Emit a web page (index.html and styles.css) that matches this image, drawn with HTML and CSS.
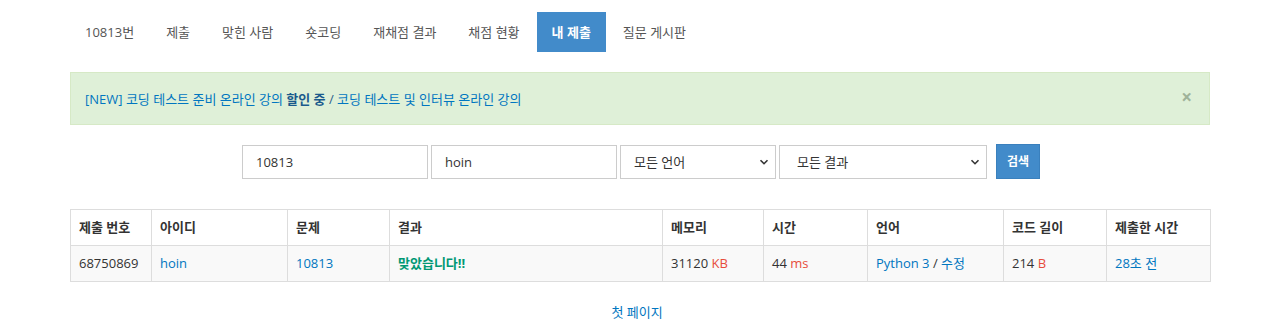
FILE: index.html
```html
<!DOCTYPE html>
<html lang="ko">
<head>
<meta charset="utf-8">
<link rel="stylesheet" href="styles.css">
</head>
<body>
<div class="container">
  <ul class="nav">
    <li><a href="#">10813번</a></li>
    <li><a href="#">제출</a></li>
    <li><a href="#">맞힌 사람</a></li>
    <li><a href="#">숏코딩</a></li>
    <li><a href="#">재채점 결과</a></li>
    <li><a href="#">채점 현황</a></li>
    <li class="active"><a href="#">내 제출</a></li>
    <li><a href="#">질문 게시판</a></li>
  </ul>

  <div class="alert">
    <span class="alert-text"><a href="#">[NEW] 코딩 테스트 준비 온라인 강의 <b>할인 중</b></a> / <a href="#">코딩 테스트 및 인터뷰 온라인 강의</a></span>
    <span class="close">×</span>
  </div>

  <form class="search">
    <input class="field f1" type="text" value="10813">
    <input class="field f2" type="text" value="hoin">
    <div class="select s1"><span>모든 언어</span><svg width="10" height="10" viewBox="0 0 10 10"><path d="M1.5 3.2 L5 6.7 L8.5 3.2" fill="none" stroke="#333" stroke-width="1.6"/></svg></div>
    <div class="select s2"><span>모든 결과</span><svg width="10" height="10" viewBox="0 0 10 10"><path d="M1.5 3.2 L5 6.7 L8.5 3.2" fill="none" stroke="#333" stroke-width="1.6"/></svg></div>
    <button class="btn" type="button">검색</button>
  </form>

  <table class="status">
    <colgroup>
      <col style="width:81px"><col style="width:136px"><col style="width:102px"><col style="width:273px"><col style="width:101px"><col style="width:104px"><col style="width:136px"><col style="width:103px"><col style="width:104px">
    </colgroup>
    <thead>
      <tr><th>제출 번호</th><th>아이디</th><th>문제</th><th>결과</th><th>메모리</th><th>시간</th><th>언어</th><th>코드 길이</th><th>제출한 시간</th></tr>
    </thead>
    <tbody>
      <tr>
        <td>68750869</td>
        <td><a href="#">hoin</a></td>
        <td><a href="#">10813</a></td>
        <td><span class="ac">맞았습니다!!</span></td>
        <td>31120 <span class="unit">KB</span></td>
        <td>44 <span class="unit">ms</span></td>
        <td><a href="#">Python 3</a> / <a href="#">수정</a></td>
        <td>214 <span class="unit">B</span></td>
        <td><a href="#">28초 전</a></td>
      </tr>
    </tbody>
  </table>

  <div class="pager"><a href="#">첫 페이지</a></div>
</div>
</body>
</html>
```
FILE: styles.css
```css
* { box-sizing: border-box; }
body {
  margin: 0;
  font-family: "Open Sans", "Noto Sans CJK KR", sans-serif;
  font-size: 13px;
  line-height: 20px;
  color: #333;
  background: #fff;
}
a { color: #0076c0; text-decoration: none; }
.container {
  width: 1140px;
  margin: 0 0 0 70px;
  padding-top: 12px;
}
.nav {
  list-style: none;
  margin: 0;
  padding: 0;
  display: flex;
}
.nav li { margin-left: 2px; }
.nav li:first-child { margin-left: 0; }
.nav a {
  display: block;
  padding: 10px 15px;
  color: #555;
}
.nav .active a {
  background: #428bca;
  color: #fff;
  font-weight: 600;
}
.alert {
  margin-top: 20px;
  height: 53px;
  background: #dff0d8;
  border: 1px solid #d6e9c6;
  display: flex;
  align-items: center;
  justify-content: space-between;
  padding: 0 15px 0 14px;
}
.alert b { font-weight: 700; color: #1a5a8c; }
.alert-text { color: #2b5f8a; }
.close {
  font-size: 19px;
  font-weight: 700;
  color: #9fb39a;
  margin-right: 2px;
  margin-top: -4px;
}
.search {
  margin-top: 20px;
  display: flex;
  justify-content: center;
  align-items: center;
  padding-left: 2px;
}
.field, .select {
  height: 34px;
  border: 1px solid #ccc;
  font: inherit;
  color: #333;
  padding: 6px 12px 6px 13px;
  margin-right: 3px;
  background: #fff;
}
.f1, .f2 { width: 186px; }
.select {
  display: flex;
  align-items: center;
  justify-content: space-between;
  padding-right: 6px;
}
.s1 { width: 156px; }
.s2 { width: 208px; padding-left: 17px; margin-right: 9px; }
.btn {
  height: 35px;
  width: 44px;
  border: 1px solid #3a80bd;
  background: #428bca;
  color: #fff;
  font: inherit;
  font-size: 12px;
  font-weight: 600;
  padding: 0;
  margin-top: -1px;
}
.status {
  margin-top: 30px;
  width: 1140px;
  table-layout: fixed;
  border-collapse: collapse;
}
.status th, .status td {
  border: 1px solid #ddd;
  padding: 7px 8px 8px;
  text-align: left;
  white-space: nowrap;
  height: 36px;
}
.status th { font-weight: 700; color: #333; }
.status tbody tr { background: #f9f9f9; }
.ac { color: #009874; font-weight: 700; }
.unit { color: #e74c3c; }
.pager {
  margin-top: 20px;
  text-align: center;
  padding-right: 6px;
}
```
